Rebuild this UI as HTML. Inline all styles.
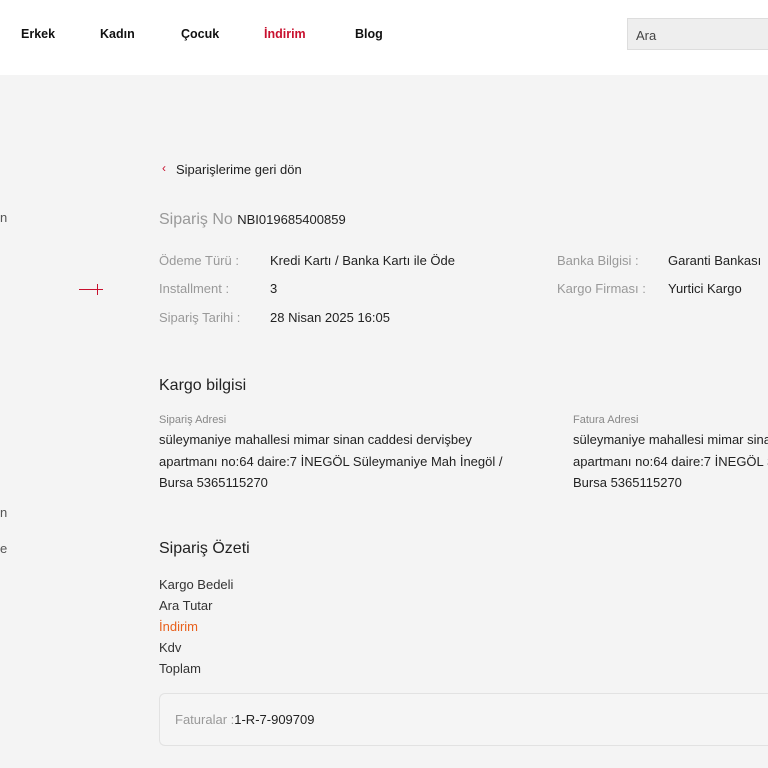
<!DOCTYPE html>
<html><head><meta charset="utf-8"><style>
*{margin:0;padding:0;box-sizing:border-box}
html,body{width:768px;height:768px;overflow:hidden}
body{background:#f4f4f4;font-family:"Liberation Sans",sans-serif;color:#222}
#w{position:relative;width:768px;height:768px;overflow:hidden}
.hdr{position:absolute;left:0;top:0;width:768px;height:75px;background:#fff}
.nav{position:absolute;top:27px;font-size:12.5px;font-weight:bold;color:#111}
.search{position:absolute;left:627px;top:18px;width:141px;height:32px;background:#eee;border:1px solid #ddd;border-right:none;font-size:13px;color:#444;padding:9px 8px}
.a{position:absolute;white-space:nowrap}
.g{color:#999;font-size:13px}
.v{color:#222;font-size:13px}
.h{font-size:16px;color:#222}
.addr{font-size:13px;line-height:21.5px;color:#222}
.sm{font-size:11px;color:#888}
.sum{font-size:13px;line-height:21px;color:#333}
.box{position:absolute;left:159px;top:693px;width:609px;height:53px;border:1px solid #e2e2e2;border-right:none;border-radius:6px 0 0 6px;background:#f5f5f5}
</style></head><body><div id="w">
<div class="hdr"></div>
<div class="nav" style="left:21px">Erkek</div>
<div class="nav" style="left:100px">Kadın</div>
<div class="nav" style="left:181px">Çocuk</div>
<div class="nav" style="left:264px;color:#c8102e">İndirim</div>
<div class="nav" style="left:355px">Blog</div>
<div class="search">Ara</div>

<div class="a" style="left:0;top:210px;font-size:13px;color:#555">n</div>
<div class="a" style="left:0;top:505px;font-size:13px;color:#555">n</div>
<div class="a" style="left:0;top:541px;font-size:13px;color:#555">e</div>

<div class="a" style="left:162px;top:161px;font-size:12px;color:#c8102e">‹</div>
<div class="a v" style="left:176px;top:162px">Siparişlerime geri dön</div>

<div class="a" style="left:159px;top:211px;font-size:16px;color:#999">Sipariş No <span style="font-size:13px;color:#222">NBI019685400859</span></div>

<div class="a g" style="left:159px;top:253px">Ödeme Türü :</div>
<div class="a v" style="left:270px;top:253px">Kredi Kartı / Banka Kartı ile Öde</div>
<div class="a g" style="left:159px;top:281px">Installment :</div>
<div class="a v" style="left:270px;top:281px">3</div>
<div class="a g" style="left:159px;top:310px">Sipariş Tarihi :</div>
<div class="a v" style="left:270px;top:310px">28 Nisan 2025 16:05</div>
<div class="a g" style="left:557px;top:253px">Banka Bilgisi :</div>
<div class="a v" style="left:668px;top:253px">Garanti Bankası</div>
<div class="a g" style="left:557px;top:281px">Kargo Firması :</div>
<div class="a v" style="left:668px;top:281px">Yurtici Kargo</div>

<div class="a" style="left:79px;top:289px;width:24px;height:1px;background:#c8102e"></div>
<div class="a" style="left:97px;top:284px;width:1px;height:11px;background:#c8102e"></div>

<div class="a h" style="left:159px;top:377px">Kargo bilgisi</div>
<div class="a sm" style="left:159px;top:414px">Sipariş Adresi</div>
<div class="a addr" style="left:159px;top:429px">süleymaniye mahallesi mimar sinan caddesi dervişbey<br>apartmanı no:64 daire:7 İNEGÖL Süleymaniye Mah İnegöl /<br>Bursa 5365115270</div>
<div class="a sm" style="left:573px;top:414px">Fatura Adresi</div>
<div class="a addr" style="left:573px;top:429px">süleymaniye mahallesi mimar sinan caddesi dervişbey<br>apartmanı no:64 daire:7 İNEGÖL Süleymaniye Mah İnegöl /<br>Bursa 5365115270</div>

<div class="a h" style="left:159px;top:540px">Sipariş Özeti</div>
<div class="a sum" style="left:159px;top:574px">Kargo Bedeli<br>Ara Tutar<br><span style="color:#e8601c">İndirim</span><br>Kdv<br>Toplam</div>

<div class="box"></div>
<div class="a" style="left:175px;top:712px;font-size:13px;color:#999">Faturalar :<span style="color:#222">1-R-7-909709</span></div>
</div></body></html>
